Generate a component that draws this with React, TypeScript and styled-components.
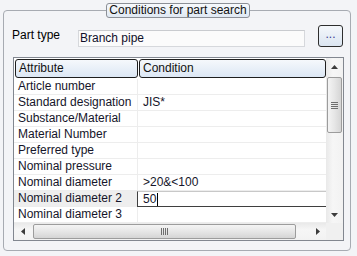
import { FC } from "react";
import styled, { createGlobalStyle } from "styled-components";

// #region styled
const GlobalStyle = createGlobalStyle`
  html, body {
    margin: 0;
    padding: 0;
    background: #f3f4f7;
  }
  body {
    font-family: "Liberation Sans", Arial, sans-serif;
    font-size: 12px;
    color: #15152a;
  }
`;

const Frame = styled.fieldset`
  box-sizing: border-box;
  width: 348px;
  height: 248px;
  margin: 3px 0 0 3px;
  padding: 0 6px 0 8px;
  min-width: 0;
  border: 1px solid #a7abb2;
  border-radius: 4px;
`;

const Legend = styled.legend`
  box-sizing: border-box;
  height: 15px;
  margin: 0 auto;
  padding: 0 2px;
  line-height: 13px;
  border: 1px solid #8b8f96;
  border-radius: 3px;
  background: linear-gradient(#f7f9fc, #dfe8f3);
  color: #111;
`;

const TypeRow = styled.div`
  display: flex;
  align-items: flex-start;
  height: 22px;
  margin-top: 7px;
`;

const Label = styled.span`
  width: 66px;
  margin-top: 2px;
  line-height: 16px;
  color: #000;
`;

const TextBox = styled.div`
  box-sizing: border-box;
  width: 227px;
  height: 17px;
  margin-top: 5px;
  padding-left: 1px;
  line-height: 15px;
  border: 1px solid #d6d8dc;
  border-top-color: #c9cbcf;
  background: #fbfbfb;
  color: #10102a;
`;

const DotsButton = styled.button`
  box-sizing: border-box;
  width: 25px;
  height: 22px;
  margin-left: 13px;
  padding: 0 0 4px;
  border: 1px solid #2e2e2e;
  border-radius: 3px;
  background: linear-gradient(#f4f7fb, #dbe5f1);
  font: inherit;
  color: #3b3b8f;
  line-height: 12px;
`;

const Table = styled.div`
  box-sizing: border-box;
  display: grid;
  grid-template-columns: 1fr 17px;
  grid-template-rows: 1fr 17px;
  width: 331px;
  height: 184px;
  margin: 10px 0 0 1px;
  border: 1px solid #828790;
  background: #fff;
`;

const Body = styled.div`
  display: flex;
  flex-direction: column;
  overflow: hidden;
`;

const Header = styled.div`
  display: flex;
  gap: 1px;
  height: 21px;
  padding: 1px 0 0 1px;
  box-sizing: border-box;
`;

const HeaderCell = styled.div<{ w: number }>`
  box-sizing: border-box;
  width: ${p => p.w}px;
  height: 19px;
  padding-left: 3px;
  line-height: 17px;
  border: 1px solid #1e1e1e;
  border-radius: 3px;
  background: linear-gradient(#f5f8fc, #dce7f4);
  color: #111;
`;

const Row = styled.div`
  display: grid;
  grid-template-columns: 124px 1fr;
  height: 16px;
`;

const Cell = styled.div<{ first?: boolean; shade?: boolean }>`
  box-sizing: border-box;
  height: 16px;
  padding-left: ${p => (p.first ? 4 : 5)}px;
  line-height: 15px;
  white-space: nowrap;
  border-bottom: 1px solid #ededed;
  border-right: ${p => (p.first ? "1px solid #ededed" : "none")};
  background: ${p => (p.shade ? "#eeeeee" : "transparent")};
`;

const EditCell = styled.div`
  box-sizing: border-box;
  display: flex;
  align-items: center;
  height: 16px;
  margin-left: -1px;
  padding-left: 5px;
  border-left: 1px solid #3f3f3f;
  border-top: 1px solid #c8c8c8;
  border-bottom: 1px solid #3f3f3f;
  background: #fff;
`;

const Caret = styled.span`
  width: 1px;
  height: 13px;
  margin-left: 1px;
  background: #000;
`;

const VScroll = styled.div`
  display: flex;
  flex-direction: column;
  background: linear-gradient(to right, #e9e9e9, #f6f6f6 40%, #f2f2f2);
`;

const HScroll = styled.div`
  display: flex;
  align-items: center;
  background: linear-gradient(#e9e9e9, #f6f6f6 40%, #f2f2f2);
`;

const ArrowBox = styled.div`
  display: flex;
  align-items: center;
  justify-content: center;
  width: 17px;
  height: 17px;
  flex: none;
`;

const VThumb = styled.div`
  box-sizing: border-box;
  display: flex;
  align-items: center;
  justify-content: center;
  width: 15px;
  height: 56px;
  margin: 2px 0 0 1px;
  border: 1px solid #9c9c9c;
  border-radius: 2px;
  background: linear-gradient(to right, #f4f4f4, #e6e6e6 50%, #d5d5d5);
`;

const HThumb = styled.div`
  box-sizing: border-box;
  display: flex;
  align-items: center;
  justify-content: center;
  width: 263px;
  height: 15px;
  margin-left: 2px;
  border: 1px solid #9c9c9c;
  border-radius: 2px;
  background: linear-gradient(#f4f4f4, #e6e6e6 50%, #d5d5d5);
`;

const Spacer = styled.div`
  flex: 1;
`;

const Corner = styled.div`
  background: #f0f0f0;
`;
// #endregion

const rows: [string, string][] = [
  ["Article number", ""],
  ["Standard designation", "JIS*"],
  ["Substance/Material", ""],
  ["Material Number", ""],
  ["Preferred type", ""],
  ["Nominal pressure", ""],
  ["Nominal diameter", ">20&<100"],
  ["Nominal diameter 2", "50"],
  ["Nominal diameter 3", ""],
];

const Arrow: FC<{ dir: "up" | "down" | "left" | "right" }> = ({ dir }) => {
  const pts = {
    up: "0,4 7,4 3.5,0",
    down: "0,0 7,0 3.5,4",
    left: "4,0 4,7 0,3.5",
    right: "0,0 0,7 4,3.5",
  }[dir];
  const vertical = dir === "up" || dir === "down";
  return (
    <svg width={vertical ? 7 : 4} height={vertical ? 4 : 7}>
      <polygon points={pts} fill="#3c3c3c" />
    </svg>
  );
};

const Grip: FC<{ vertical?: boolean }> = ({ vertical }) =>
  vertical ? (
    <svg width="7" height="7">
      {[0, 2, 4, 6].map(y => (
        <rect key={y} x="0" y={y} width="7" height="1" fill="#6e6e6e" />
      ))}
    </svg>
  ) : (
    <svg width="7" height="7">
      {[0, 2, 4, 6].map(x => (
        <rect key={x} x={x} y="0" width="1" height="7" fill="#6e6e6e" />
      ))}
    </svg>
  );

const App: FC = () => (
  <>
    <GlobalStyle />
    <Frame>
      <Legend>Conditions for part search</Legend>
      <TypeRow>
        <Label>Part type</Label>
        <TextBox>Branch pipe</TextBox>
        <DotsButton>...</DotsButton>
      </TypeRow>
      <Table>
        <Body>
          <Header>
            <HeaderCell w={123}>Attribute</HeaderCell>
            <HeaderCell w={187}>Condition</HeaderCell>
          </Header>
          {rows.map(([name, cond]) => {
            const editing = name === "Nominal diameter 2";
            return (
              <Row key={name}>
                <Cell first shade={editing}>{name}</Cell>
                {editing ? (
                  <EditCell>
                    {cond}
                    <Caret />
                  </EditCell>
                ) : (
                  <Cell>{cond}</Cell>
                )}
              </Row>
            );
          })}
        </Body>
        <VScroll>
          <ArrowBox><Arrow dir="up" /></ArrowBox>
          <VThumb><Grip vertical /></VThumb>
          <Spacer />
          <ArrowBox><Arrow dir="down" /></ArrowBox>
        </VScroll>
        <HScroll>
          <ArrowBox><Arrow dir="left" /></ArrowBox>
          <HThumb><Grip /></HThumb>
          <Spacer />
          <ArrowBox><Arrow dir="right" /></ArrowBox>
        </HScroll>
        <Corner />
      </Table>
    </Frame>
  </>
);

export default App;
